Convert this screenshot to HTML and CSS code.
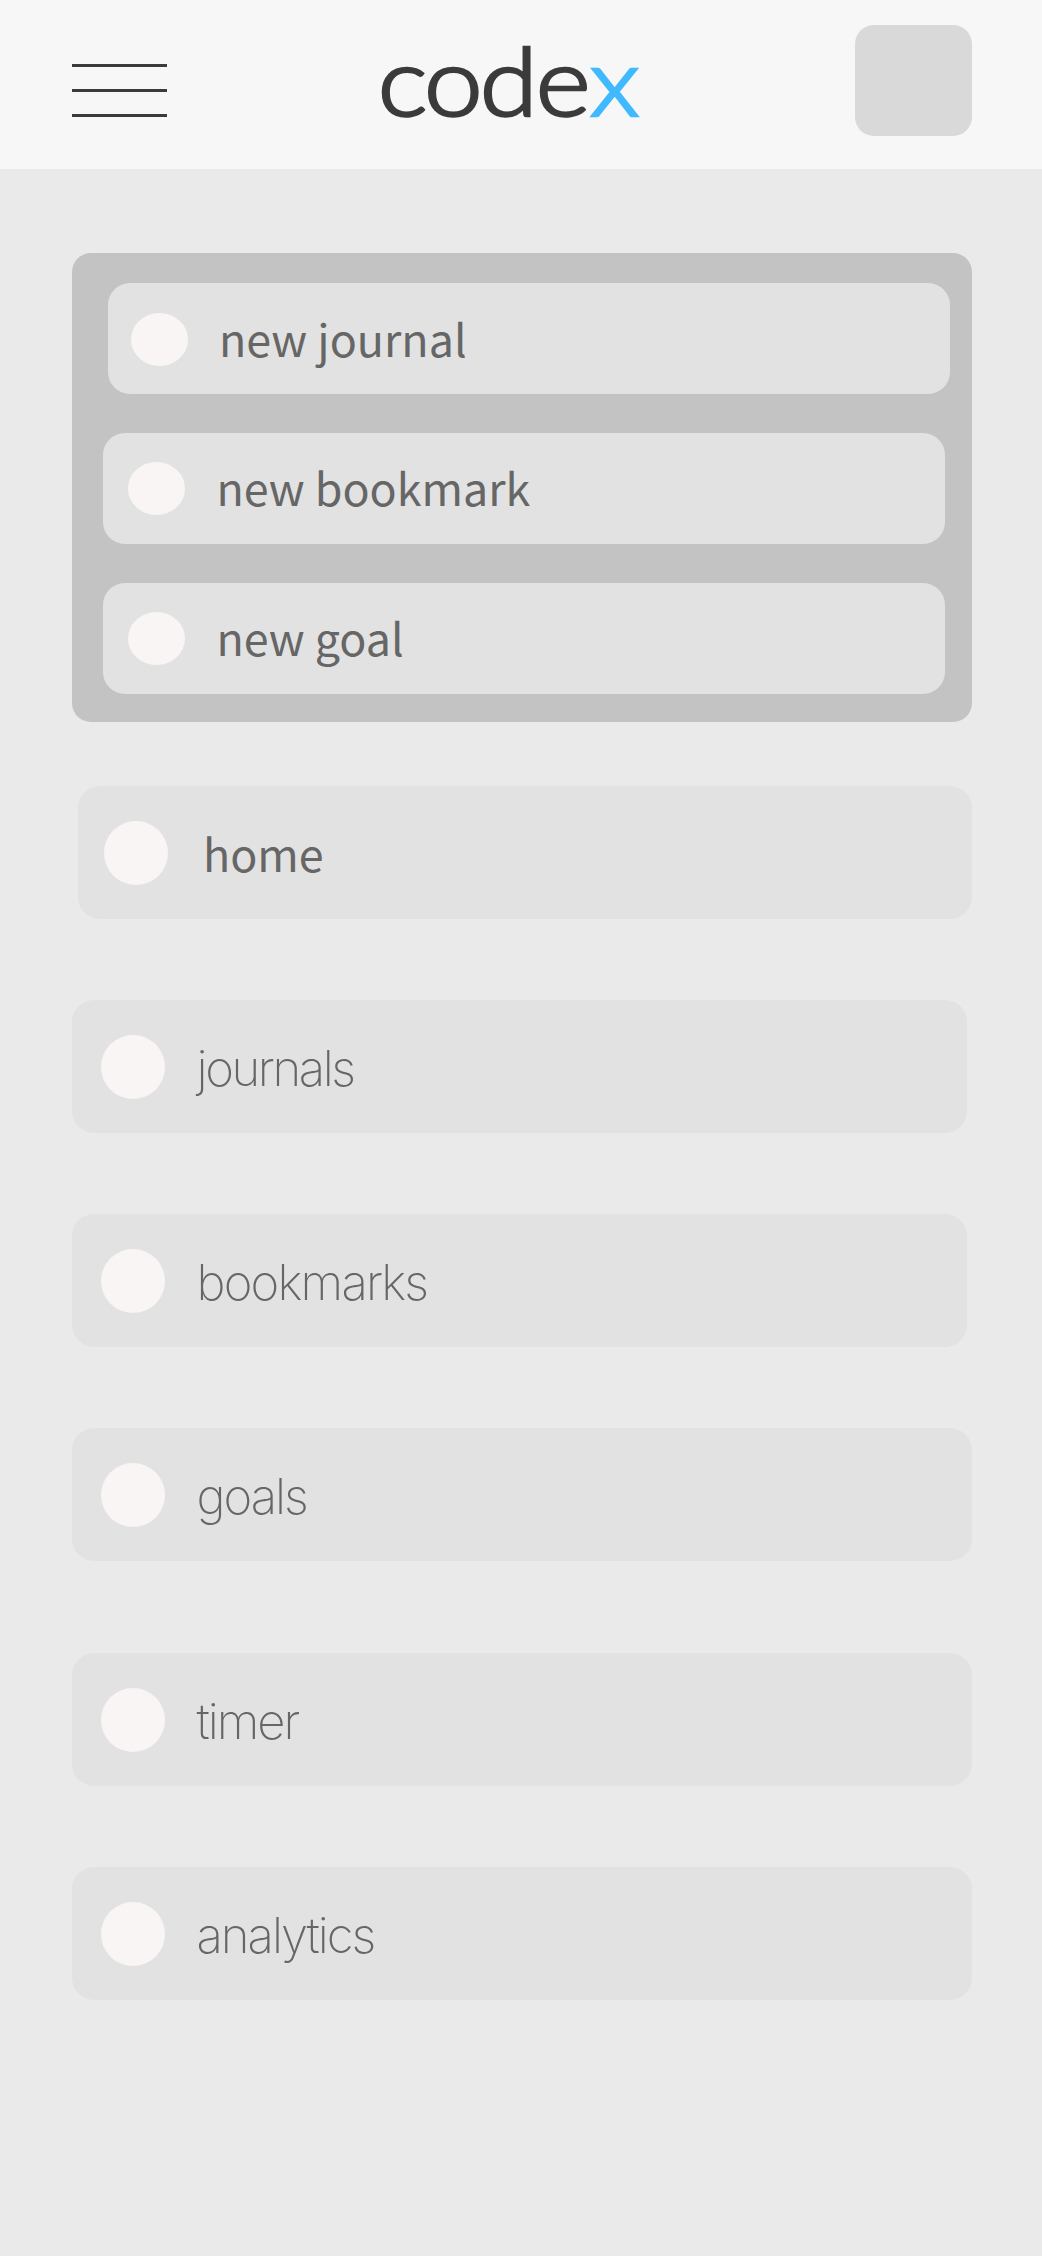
FILE: index.html
```html
<!DOCTYPE html>
<html lang="en">
<head>
<meta charset="utf-8">
<title>codex</title>
<link rel="stylesheet" href="styles.css">
</head>
<body>
<header class="topbar">
  <button class="menu" aria-label="Menu"><span class="bar"></span><span class="bar"></span><span class="bar"></span></button>
  <svg class="logo" viewBox="0 0 280 100" role="img" aria-label="codex">
    <text class="logo-text" transform="translate(0 81) scale(1.1 1)" x="4.4 46.3 97 148 197.2" y="0">code<tspan class="accent">x</tspan></text>
  </svg>
  <div class="avatar"></div>
</header>
<main class="page">
  <section class="create">
    <a class="action action-first"><span class="dot"></span><span class="label">new journal</span></a>
    <a class="action"><span class="dot"></span><span class="label">new bookmark</span></a>
    <a class="action"><span class="dot"></span><span class="label">new goal</span></a>
  </section>
  <nav class="nav">
    <a class="item home"><span class="dot"></span><span class="label">home</span></a>
    <a class="item narrow journals"><span class="dot"></span><span class="label">journals</span></a>
    <a class="item narrow bookmarks"><span class="dot"></span><span class="label">bookmarks</span></a>
    <a class="item goals"><span class="dot"></span><span class="label">goals</span></a>
    <a class="item timer"><span class="dot"></span><span class="label">timer</span></a>
    <a class="item analytics"><span class="dot"></span><span class="label">analytics</span></a>
  </nav>
</main>
</body>
</html>
```

FILE: styles.css
```css
* { box-sizing: border-box; }

body {
  margin: 0;
  min-height: 2256px;
  background: #eaeaea;
  color: #666;
}

.topbar {
  display: flex;
  justify-content: space-between;
  height: 169.4px;
  padding: 25px 70px 0 72px;
  background: #f7f7f7;
}

.menu {
  display: flex;
  flex-direction: column;
  gap: 22px;
  width: 95px;
  margin: 38.6px 0 0;
  padding: 0;
  border: 0;
  background: none;
}

.bar { flex: none; width: 95px; height: 3px; background: #3b3b3b; }

.logo { width: 280px; height: 100px; margin: 10px 0 0 4px; overflow: visible; }
.logo-text { font-family: Lato, sans-serif; font-size: 95.5px; font-weight: 300; fill: #3b3b3b; stroke: #3b3b3b; stroke-width: 2.7px; }
.accent { fill: #40b9ff; stroke: #40b9ff; }

.avatar { width: 117px; height: 111px; border-radius: 19px; background: #d9d9d9; }

.page { padding: 83.6px 70px 0 72px; }

.create {
  display: flex;
  flex-direction: column;
  gap: 38.7px;
  height: 469px;
  padding: 30.2px 27px 0 31px;
  border-radius: 19px;
  background: #c3c3c3;
}

.action {
  display: flex;
  align-items: center;
  width: 842px;
  height: 111.3px;
  padding-left: 25.4px;
  border-radius: 22px;
  background: #e2e2e2;
}
.action-first { margin-left: 5px; padding-left: 23px; }

.dot { flex: none; border-radius: 50%; background: #f9f5f5; }
.action .dot { width: 57px; height: 53px; }
.action-first .dot { margin-top: 1px; }
.item .dot { width: 64px; height: 64px; margin-top: 1px; }

.label { white-space: nowrap; line-height: 70px; }
.action .label, .home .label {
  margin-left: 31px;
  font-family: "Noto Sans CJK SC", sans-serif;
  font-size: 44.8px;
}
.action .label { padding-bottom: 3px; }
.action-first .label { padding-bottom: 2px; }

.nav { display: flex; flex-direction: column; margin-top: 64px; }

.item {
  display: flex;
  align-items: center;
  height: 133.4px;
  margin-bottom: 80.5px;
  padding-left: 29px;
  border-radius: 22px;
  background: #e2e2e2;
}
.item .label {
  margin-left: 31.5px;
  padding-top: 5px;
  font-family: Inter, sans-serif;
  font-size: 49px;
  font-weight: 150;
  letter-spacing: -2px;
}
.narrow { margin-right: 5px; }
.journals .label { letter-spacing: -2.4px; }
.bookmarks .label { letter-spacing: -1.8px; }
.goals { margin-bottom: 91.8px; }
.home { margin-left: 6px; padding-left: 26px; }
.home .label {
  margin-left: 35px;
  padding: 1px 0 0;
  font-family: "Noto Sans CJK SC", sans-serif;
  font-size: 44.8px;
  font-weight: 400;
  letter-spacing: 0;
}
```
